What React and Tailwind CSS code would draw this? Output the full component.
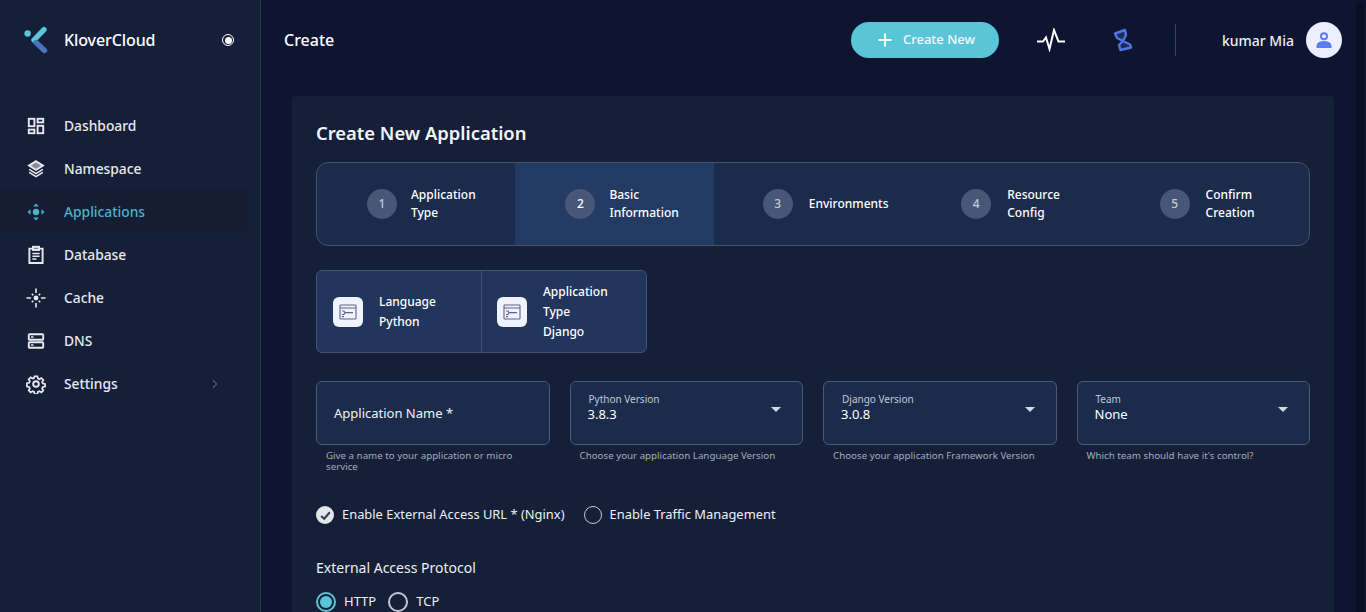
import React from "react";
import { Plus, ChevronRight } from "lucide-react";

const Ic = ({ children, className = "" }) => (
  <svg width="20" height="20" viewBox="0 0 20 20" fill="none" stroke="currentColor" strokeWidth="1.9" className={className}>{children}</svg>
);

const nav = [
  ["Dashboard", <Ic><rect x="2.8" y="2.8" width="5.6" height="7.4" /><rect x="11.6" y="2.8" width="5.6" height="3.6" /><rect x="2.8" y="13.6" width="5.6" height="3.6" /><rect x="11.6" y="9.8" width="5.6" height="7.4" /></Ic>],
  ["Namespace", <Ic><path d="M10 2.2 17 6.600l-7 4.400L3 6.600z" fill="currentColor" fillOpacity="0.55" /><path d="M3.200 10.400 10 14.600l6.800-4.200M3.200 13.400 10 17.600l6.800-4.200" strokeWidth="1.6" /></Ic>],
  ["Applications", <Ic><circle cx="10" cy="10" r="3.200" fill="currentColor" stroke="none" /><path d="M10 1.500l2.800 3H7.200zM10 18.500l-2.800-3h5.600zM1.500 10l3-2.800v5.600zM18.500 10l-3 2.800V7.200z" fill="currentColor" stroke="none" /></Ic>],
  ["Database", <Ic><path d="M7 3.600H3.400v14.400h13.200V3.600H13" /><rect x="7" y="1.800" width="6" height="3.200" fill="currentColor" fillOpacity="0.5" /><path d="M6.400 8.400h7.200M6.400 11.200h7.200M6.400 14h4" strokeWidth="1.500" /></Ic>],
  ["Cache", <Ic><circle cx="10" cy="10" r="2.400" fill="currentColor" stroke="none" /><path d="M10 .5v4.500M10 15v4.500M.5 10H5M15 10h4.500M5.800 5.800l1.500 1.500M12.700 12.700l1.500 1.500M14.200 5.800l-1.500 1.500M7.300 12.700l-1.500 1.500" strokeWidth="1.600" /></Ic>],
  ["DNS", <Ic><rect x="2.800" y="3.200" width="14.400" height="5.600" rx="0.800" /><rect x="2.800" y="11.200" width="14.400" height="5.600" rx="0.800" /><path d="M5 6h2.500M5 14h2.500" strokeWidth="1.500" /></Ic>],
  ["Settings", <Ic><circle cx="10" cy="10" r="2.800" /><path d="M8.600 2.400h2.800l.4 2.200 1.500.7 1.900-1.200 2 2-1.200 1.900.7 1.500 2.200.4v2.600l-2.200.4-.7 1.500 1.200 1.900-2 2-1.900-1.200-1.500.7-.4 2.200H8.600l-.4-2.200-1.500-.7-1.900 1.200-2-2 1.200-1.900-.7-1.500-2.200-.4V9.200l2.200-.4.7-1.500-1.200-1.900 2-2 1.900 1.200 1.500-.7z" transform="translate(-.2 -.2) scale(1.020)" strokeWidth="1.700" /></Ic>],
];

const steps = [
  ["1", ["Application", "Type"], "pl-[50px]", "ml-[14px]"],
  ["2", ["Basic", "Information"], "pl-[50px]", "ml-[14px]"],
  ["3", ["Environments"], "pl-[49px]", "ml-[16px]"],
  ["4", ["Resource", "Config"], "pl-[49px]", "ml-[16px]"],
  ["5", ["Confirm", "Creation"], "pl-[49px]", "ml-[16px]"],
];

const TermIcon = () => (
  <div className="w-[30px] h-[30px] rounded-md bg-[#eff3ff] flex items-center justify-center shrink-0">
    <svg width="18" height="16" viewBox="0 0 18 16" fill="none" stroke="#5d6488" strokeWidth="1.100">
      <rect x="1" y="1" width="16" height="14" rx="0.800" />
      <path d="M1 4h16M3 7h2l1 1.600H14M6 8.600 5 10.500H3M3 12.600h2" />
    </svg>
  </div>
);

const Select = ({ label, value, help }) => (
  <div>
    <div className="h-16 rounded-md border border-[#4c5a78] bg-[#1b2b4b] relative px-[17px] pt-[11px]">
      <div className="text-[10px] leading-[12px] text-[#c3c8d4] pl-[1px]">{label}</div>
      <div className="text-[13px] leading-[16px] text-white mt-[1px]">{value}</div>
      <div className="absolute right-[21px] top-[25px] w-0 h-0 border-x-[5px] border-x-transparent border-t-[5px] border-t-[#d5d8e0]" />
    </div>
    <p className="text-[9.750px] leading-[11px] text-[#a4abba] mt-[5px] pl-[10px] pr-[9px]">{help}</p>
  </div>
);

export default function App() {
  return (
    <div className="relative h-[612px] w-[1366px] overflow-hidden flex bg-[#0d1530] text-white font-['Noto_Sans','Open_Sans',sans-serif]">
      <aside className="w-[261px] shrink-0 bg-[#151f38] border-r border-[#2b3650] h-full">
        <div className="h-20 flex items-center pl-[24px] pr-[26px]">
          <svg width="24" height="28" viewBox="0 0 24 28" className="shrink-0">
            <circle cx="3.600" cy="7.500" r="3.200" fill="#5cc6d8" />
            <path d="M10 14 20 3.600" stroke="#5cc6d8" strokeWidth="5.400" strokeLinecap="round" />
            <path d="M12 16.500 20.500 24.500" stroke="#4a72bf" strokeWidth="5.400" strokeLinecap="round" />
          </svg>
          <span className="ml-[16px] text-[16px] font-medium leading-none flex-1 tracking-[-0.1px]">KloverCloud</span>
          <span className="w-3 h-3 rounded-full border border-white flex items-center justify-center"><span className="w-[7px] h-[7px] rounded-full bg-white" /></span>
        </div>
        <nav className="mt-[24px]">
          {nav.map(([name, icon]) => {
            const active = name === "Applications";
            return (
              <div key={name} className={`h-[43px] flex items-center pl-[26px] w-[248px] ${active ? "bg-[#141d34] text-[#4db3c7]" : "text-[#e8eaf0]"}`}>
                {icon}
                <span className="ml-[18px] pt-[2px] text-[13.800px] font-medium flex-1">{name}</span>
                {name === "Settings" && <ChevronRight size={14} className="text-[#4a5270] mr-[26px]" strokeWidth={2.600} />}
              </div>
            );
          })}
        </nav>
      </aside>
      <main className="flex-1 min-w-0 flex flex-col">
        <header className="h-20 shrink-0 flex items-center pl-[23px] pr-[24px]">
          <h1 className="text-[16px] font-medium flex-1">Create</h1>
          <button className="w-[148px] h-9 rounded-full bg-[#5bc5d8] flex items-center justify-center gap-[8px] text-[13px] font-medium text-[#f2fbfd]">
            <Plus size={20} strokeWidth={2.200} className="text-white" />Create New
          </button>
          <svg width="28" height="24" viewBox="0 0 28 24" fill="none" stroke="white" strokeWidth="2" className="ml-[38px]">
            <path d="M0 13.500h6l3-4 3.500 11.500L17 2l4.500 11.500H28" />
          </svg>
          <svg width="20" height="24" viewBox="0 0 20 24" fill="none" stroke="#4f74e3" strokeWidth="2.400" className="ml-[48px]">
            <path d="M2 5.500 12 2 13 7 10 13 17 16.500 18 19.500 7.500 22 6 17 10 13 4 10z" fill="#4f74e3" fillOpacity="0.250" strokeLinejoin="round" />
          </svg>
          <div className="w-px h-8 bg-[#3c4660] ml-[42px]" />
          <span className="ml-[46px] text-[14px] font-medium text-[#eceef3]">kumar Mia</span>
          <div className="ml-3 w-9 h-9 rounded-full bg-[#ebefff] flex items-center justify-center">
            <svg width="20" height="20" viewBox="0 0 20 20" fill="none" stroke="#5b7cf0" strokeWidth="2">
              <circle cx="10" cy="6.200" r="3" />
              <path d="M3.500 17v-1.200c0-2.600 3.500-3.800 6.500-3.800s6.500 1.200 6.500 3.800V17z" fill="#5b7cf0" />
            </svg>
          </div>
        </header>
        <div className="flex flex-1 min-h-0 pl-[31px]">
          <section className="w-[1042px] bg-[#151f38] rounded-t pt-[23px] px-[24px] mt-[16px]">
            <h2 className="text-[18.400px] font-semibold leading-[28px] text-[#f4f5f8]">Create New Application</h2>
            <div className="mt-[15px] h-[84px] rounded-xl border border-[#44526f] bg-[#1b2b4b] grid grid-cols-5 overflow-hidden">
              {steps.map(([n, lines, pad, gap]) => {
                const active = n === "2";
                return (
                  <div key={n} className={`flex items-center ${pad} ${active ? "bg-[#233a63]" : ""}`}>
                    <span className={`w-[30px] h-[30px] rounded-full bg-[#465777] flex items-center justify-center text-[12px] font-medium shrink-0 ${active ? "text-white" : "text-[#c4cad6]"}`}>{n}</span>
                    <div className={`${gap} text-[12px] font-medium leading-[18px]`}>
                      {lines.map((l) => <div key={l}>{l}</div>)}
                    </div>
                  </div>
                );
              })}
            </div>
            <div className="mt-[24px] w-[331px] h-[83px] rounded-md border border-[#44526f] bg-[#22355c] flex text-[12px] font-medium leading-[20px]">
              <div className="w-[165px] flex items-center pl-[16px] border-r border-[#44526f]">
                <TermIcon />
                <div className="ml-[16px]"><div>Language</div><div>Python</div></div>
              </div>
              <div className="flex-1 flex items-center pl-[15px]">
                <TermIcon />
                <div className="ml-[16px]"><div>Application</div><div>Type</div><div>Django</div></div>
              </div>
            </div>
            <div className="mt-[28px] grid grid-cols-4 gap-x-5">
              <div>
                <div className="h-16 rounded-md border border-[#4c5a78] bg-[#1b2b4b] flex items-center px-[17px] pt-[2px] text-[13px] text-[#f0f2f6]">Application Name *</div>
                <p className="text-[9.750px] leading-[11px] text-[#a4abba] mt-[5px] pl-[10px] pr-[9px]">Give a name to your application or micro service</p>
              </div>
              <Select label="Python Version" value="3.8.3" help="Choose your application Language Version" />
              <Select label="Django Version" value="3.0.8" help="Choose your application Framework Version" />
              <Select label="Team" value="None" help="Which team should have it's control?" />
            </div>
            <div className="mt-[34px] flex items-center text-[12.900px] text-[#eef0f4] h-[18px]">
              <span className="w-[18px] h-[18px] rounded-full bg-[#e4e6ec] flex items-center justify-center shrink-0">
                <svg width="13" height="13" viewBox="0 0 12 12" fill="none" stroke="#333c52" strokeWidth="1.800"><path d="M2 6.500 4.800 9 10 3" /></svg>
              </span>
              <span className="ml-2">Enable External Access URL * (Nginx)</span>
              <span className="ml-[19px] w-[18px] h-[18px] rounded-full border border-[#c4c7cf] shrink-0" />
              <span className="ml-2">Enable Traffic Management</span>
            </div>
            <h3 className="mt-[34px] text-[14px] leading-[20px] text-[#eef0f4]">External Access Protocol</h3>
            <div className="mt-[14px] flex items-center text-[13px] text-[#eef0f4]">
              <span className="w-5 h-5 rounded-full border-2 border-[#5bc5d8] flex items-center justify-center shrink-0"><span className="w-3 h-3 rounded-full bg-[#5bc5d8]" /></span>
              <span className="ml-2">HTTP</span>
              <span className="ml-3 w-5 h-5 rounded-full border-2 border-[#c4c7cf] shrink-0" />
              <span className="ml-2">TCP</span>
            </div>
          </section>
          <div className="flex-1" />
        </div>
      </main>
      <div className="absolute top-[2px] left-[1356px] w-2 h-[640px] rounded-full bg-[#0a0f22]" />
    </div>
  );
}
